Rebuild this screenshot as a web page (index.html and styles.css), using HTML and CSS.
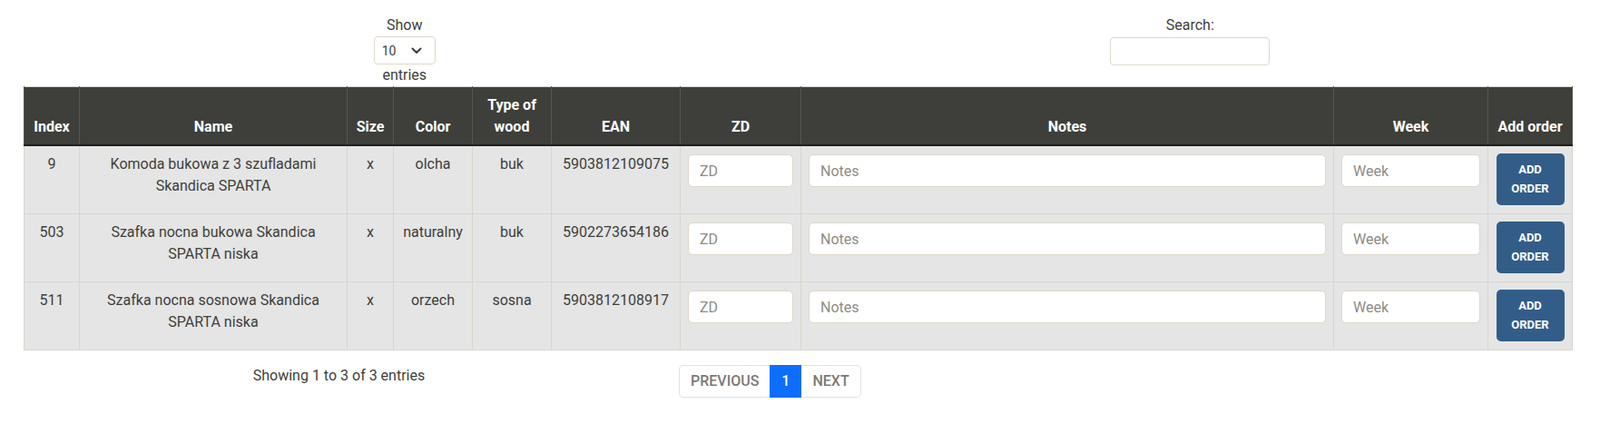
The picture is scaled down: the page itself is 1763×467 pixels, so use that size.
FILE: index.html
```html
<!DOCTYPE html>
<html lang="en">
<head>
<meta charset="utf-8">
<title>Products</title>
<link rel="stylesheet" href="styles.css">
</head>
<body>
<div class="wrap">
  <div class="controls">
    <div class="length">
      <label class="ctl-label">Show
        <span class="select-box">
          <select class="len-select"><option>10</option><option>25</option><option>50</option><option>100</option></select>
          <svg class="chev" viewBox="0 0 12 8" aria-hidden="true"><path d="M1.5 1.5 L6 6 L10.5 1.5" fill="none" stroke="#3e3f3a" stroke-width="2" stroke-linecap="round" stroke-linejoin="round"/></svg>
        </span>
        entries
      </label>
    </div>
    <div class="search">
      <label class="ctl-label">Search:
        <input class="search-input" type="search">
      </label>
    </div>
  </div>

  <table class="data">
    <colgroup>
      <col class="c-index"><col class="c-name"><col class="c-size"><col class="c-color"><col class="c-wood"><col class="c-ean"><col class="c-zd"><col class="c-notes"><col class="c-week"><col class="c-add">
    </colgroup>
    <thead>
      <tr>
        <th>Index</th><th>Name</th><th>Size</th><th>Color</th><th>Type of wood</th><th>EAN</th><th>ZD</th><th>Notes</th><th>Week</th><th>Add order</th>
      </tr>
    </thead>
    <tbody>
      <tr>
        <td>9</td>
        <td>Komoda bukowa z 3 szufladami Skandica SPARTA</td>
        <td>x</td><td>olcha</td><td>buk</td><td>5903812109075</td>
        <td><input class="cell-input" placeholder="ZD"></td>
        <td><input class="cell-input" placeholder="Notes"></td>
        <td><input class="cell-input" placeholder="Week"></td>
        <td><button class="add-btn">Add order</button></td>
      </tr>
      <tr>
        <td>503</td>
        <td>Szafka nocna bukowa Skandica SPARTA niska</td>
        <td>x</td><td>naturalny</td><td>buk</td><td>5902273654186</td>
        <td><input class="cell-input" placeholder="ZD"></td>
        <td><input class="cell-input" placeholder="Notes"></td>
        <td><input class="cell-input" placeholder="Week"></td>
        <td><button class="add-btn">Add order</button></td>
      </tr>
      <tr>
        <td>511</td>
        <td>Szafka nocna sosnowa Skandica SPARTA niska</td>
        <td>x</td><td>orzech</td><td>sosna</td><td>5903812108917</td>
        <td><input class="cell-input" placeholder="ZD"></td>
        <td><input class="cell-input" placeholder="Notes"></td>
        <td><input class="cell-input" placeholder="Week"></td>
        <td><button class="add-btn">Add order</button></td>
      </tr>
    </tbody>
  </table>

  <div class="footer">
    <div class="info">Showing 1 to 3 of 3 entries</div>
    <ul class="pagination">
      <li class="page prev"><a href="#">Previous</a></li>
      <li class="page active"><a href="#">1</a></li>
      <li class="page next"><a href="#">Next</a></li>
    </ul>
  </div>
</div>
</body>
</html>
```

FILE: styles.css
```css
* { box-sizing: border-box; }

body {
  margin: 0;
  font-family: Roboto, "Noto Sans", "Liberation Sans", sans-serif;
  font-size: 16px;
  line-height: 24px;
  color: #3e3f3a;
  background: #ffffff;
}

.wrap {
  padding: 16px 19px 0 13px;
}

.controls {
  display: grid;
  grid-template-columns: 1fr 1fr;
}

.ctl-label {
  display: flex;
  flex-direction: column;
  align-items: center;
  font-weight: 400;
}

.select-box {
  position: relative;
  display: block;
  width: 68px;
  height: 31px;
}

.len-select {
  appearance: none;
  -webkit-appearance: none;
  display: block;
  width: 100%;
  height: 100%;
  margin: 0;
  border: 1px solid #dfd7ca;
  border-radius: 4px;
  background: #ffffff;
  color: #3e3f3a;
  font-family: Roboto, "Noto Sans", sans-serif;
  font-size: 14px;
  padding: 0 0 0 8px;
}

.chev {
  position: absolute;
  right: 15px;
  top: 12px;
  width: 12px;
  height: 8px;
  pointer-events: none;
}

.search-input {
  display: block;
  width: 176px;
  height: 31px;
  margin: 1px 0 0;
  border: 1px solid #dfd7ca;
  border-radius: 4px;
  background: #ffffff;
  font-family: Roboto, "Noto Sans", sans-serif;
  font-size: 14px;
}

.data {
  width: 1706px;
  margin: 0 12px 0 13px;
  border-collapse: collapse;
  table-layout: fixed;
  border: 1px solid #dad6cd;
}

.c-index { width: 61px; }
.c-name { width: 295px; }
.c-size { width: 51px; }
.c-color { width: 87px; }
.c-wood { width: 87px; }
.c-ean { width: 142px; }
.c-zd { width: 133px; }
.c-notes { width: 587px; }
.c-week { width: 170px; }
.c-add { width: 93px; }

.data th {
  background: #3e3f3a;
  color: #ffffff;
  font-weight: 700;
  padding: 8px 8px 7px;
  vertical-align: bottom;
  text-align: center;
  border-left: 1px solid #56554f;
  border-right: 1px solid #56554f;
  border-bottom: 2px solid #1f1f1c;
}

.data td {
  background: #e5e5e5;
  padding: 8px 8px 9px;
  border: 1px solid #dad6cd;
  vertical-align: top;
  text-align: center;
  color: #3e3f3a;
}

.cell-input {
  display: block;
  width: 100%;
  height: 36px;
  margin-top: 1px;
  padding: 6px 12px;
  border: 1px solid #dfd7ca;
  border-radius: 5px;
  background: #ffffff;
  font-family: Roboto, "Noto Sans", sans-serif;
  font-size: 16px;
  color: #3e3f3a;
}

.cell-input::placeholder {
  color: #8e8c84;
  opacity: 1;
}

.add-btn {
  display: block;
  width: 75px;
  margin: 0 auto;
  padding: 8px 10px;
  border: none;
  border-radius: 5px;
  background: #325d88;
  color: #ffffff;
  font-family: Roboto, "Noto Sans", sans-serif;
  font-weight: 700;
  font-size: 13px;
  line-height: 20.5px;
  text-transform: uppercase;
  white-space: normal;
}

.footer {
  display: flex;
  align-items: flex-start;
}

.info {
  width: 721px;
  margin-top: 16px;
  text-align: center;
}

.pagination {
  display: flex;
  list-style: none;
  margin: 16px 0 0 14px;
  padding: 0;
}

.page a {
  display: block;
  padding: 5px 12px;
  line-height: 24px;
  font-size: 16px;
  font-weight: 500;
  color: #7b7a74;
  text-decoration: none;
  text-transform: uppercase;
  border: 1px solid #dee2e6;
  background: #ffffff;
}

.prev a {
  border-right: none;
  border-radius: 5px 0 0 5px;
}

.next a {
  border-left: none;
  border-radius: 0 5px 5px 0;
}

.active a {
  background: #0d6efd;
  border-color: #0d6efd;
  color: #ffffff;
  padding: 5px 12px;
}
```
